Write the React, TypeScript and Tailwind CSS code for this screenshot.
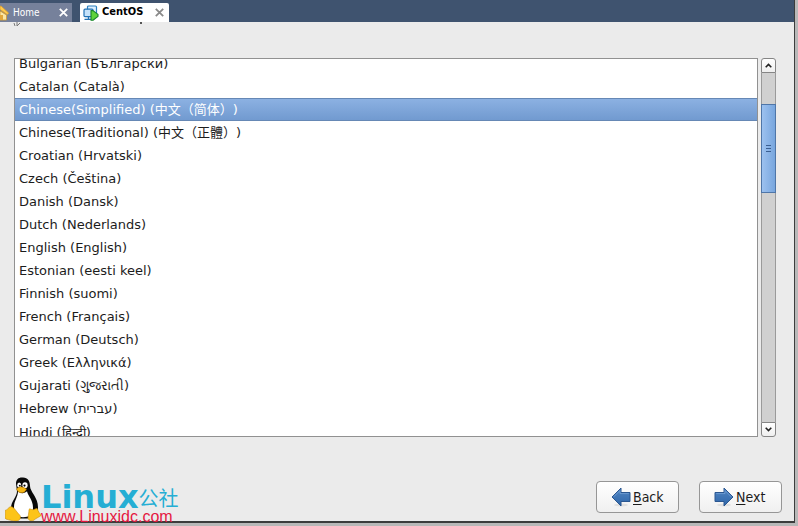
import { useState } from "react";

const languages = [
  { name: "Bulgarian (Български)" },
  { name: "Catalan (Català)" },
  { name: "Chinese(Simplified) (中文（简体）)" },
  { name: "Chinese(Traditional) (中文（正體）)" },
  { name: "Croatian (Hrvatski)" },
  { name: "Czech (Čeština)" },
  { name: "Danish (Dansk)" },
  { name: "Dutch (Nederlands)" },
  { name: "English (English)" },
  { name: "Estonian (eesti keel)" },
  { name: "Finnish (suomi)" },
  { name: "French (Français)" },
  { name: "German (Deutsch)" },
  { name: "Greek (Ελληνικά)" },
  { name: "Gujarati (ગુજરાતી)" },
  { name: "Hebrew (עברית)", tall: true },
  { name: "Hindi (हिन्दी)", tall: true },
];

function CloseIcon() {
  return (
    <svg viewBox="0 0 9 9" className="size-[9px]" fill="none" stroke="currentColor" strokeWidth="1.8">
      <path d="M.8.8 8.2 8.2M8.2.8.8 8.2" />
    </svg>
  );
}

function HomeIcon() {
  return (
    <svg viewBox="0 0 9 16" className="h-4 w-[9px] shrink-0">
      <path d="M0 6.5h1L6.5 10v5H0z" fill="#fae6a6" stroke="#d39a2c" strokeWidth=".8" />
      <path d="M0 1.2h1.2L8.6 8 7.3 9.6 0 4.4z" fill="#ffc94d" stroke="#e0a22c" strokeWidth=".8" />
      <path d="M0 10h3v5H0z" fill="#e2a63a" />
    </svg>
  );
}

function MachineIcon() {
  return (
    <svg viewBox="0 0 16 16" className="size-4 shrink-0">
      <rect x="4.5" y="1" width="9" height="8" rx="1" fill="#dcefff" stroke="#2b7fc0" strokeWidth="1.2" />
      <rect x="1" y="4.2" width="9" height="7.5" rx="1" fill="#c5e2fa" stroke="#2272b5" strokeWidth="1.2" />
      <path d="M1.5 14.4h7M5.5 12v2" stroke="#2272b5" strokeWidth="1.4" />
      <path d="M8 5.6 10 5.6 15 9.4v2L10 15.3H8z" fill="#5ed33b" stroke="#17852b" strokeWidth="1.1" strokeLinejoin="round" />
    </svg>
  );
}

function ArrowIcon({ flip = false }: { flip?: boolean }) {
  return (
    <svg viewBox="0 0 20 20" className={flip ? "size-5 -scale-x-100" : "size-5"}>
      <defs>
        <linearGradient id="arrowFill" x1="0" y1="0" x2="0" y2="1">
          <stop offset="0" stopColor="#5185c2" />
          <stop offset="1" stopColor="#2f66a9" />
        </linearGradient>
      </defs>
      <ellipse cx="10" cy="18" rx="7" ry="1.5" fill="#000" opacity=".08" />
      <path d="M1 5.5h9V1l9 9-9 9v-4.500H1z" fill="url(#arrowFill)" stroke="#2b5791" strokeLinejoin="round" />
      <path d="M2.2 6.6H11v-3l6.200 6.200" fill="none" stroke="#7aa5d8" strokeWidth=".7" />
    </svg>
  );
}

function Penguin() {
  return (
    <svg viewBox="0 0 36 46" preserveAspectRatio="none" className="h-11 w-9 shrink-0">
      <path d="M11 7C11 2 14 0 18 .5c5 .3 7 4 7 9 0 6 8 12 8 22 0 8-5 12-14 12S5 41 6 33c0-8 6-12 6-18z" fill="#080808" />
      <path d="M13 15c3 3 7 2 9 0 1 5 6 9 6 17s-4 10-10 10-9-5-9-11 4-10 4-16z" fill="#fff" />
      <ellipse cx="14.2" cy="8.5" rx="2" ry="2.8" fill="#fff" />
      <ellipse cx="20" cy="8.5" rx="2.6" ry="3" fill="#fff" />
      <circle cx="14.8" cy="9" r="1" />
      <circle cx="19.5" cy="9" r="1.1" />
      <path d="M11.5 12.5c3-3 5-3 10 0-1 3-3 4-5 4s-4-1-5-4z" fill="#f5b614" stroke="#a86d00" strokeWidth=".5" />
      <path d="M0 35c3 0 3-4 6-4s5 5 8 8 1 7-3 7-6-1-10-2c-2-1 0-4-1-9z" fill="#fcc419" stroke="#c98a0b" strokeWidth=".6" />
      <path d="M24 34c1-2 2 1 5 0s3-2 4 1 3 4 3 5-5 3-7 5-6 0-6-2 1-6 1-9z" fill="#fcc419" stroke="#c98a0b" strokeWidth=".6" />
    </svg>
  );
}

function ScrollButton({ down = false }: { down?: boolean }) {
  return (
    <button
      aria-label={down ? "Scroll down" : "Scroll up"}
      className={
        "flex h-[15px] shrink-0 items-center justify-center border border-[#858585] bg-linear-to-b from-white to-[#efefef] " +
        (down ? "rounded-b-[3px]" : "rounded-t-[3px]")
      }
    >
      <svg viewBox="0 0 7 5" className={down ? "h-[5px] w-[7px] rotate-180" : "h-[5px] w-[7px]"}>
        <path d="M.7 4.2 3.5 1.4 6.3 4.2" fill="none" stroke="#222" strokeWidth="1.6" />
      </svg>
    </button>
  );
}

const actionClass =
  "flex h-8 w-[83px] items-center gap-0.5 rounded-[4px] border border-[#969696] bg-linear-to-b from-white to-[#f0f0f0] pl-3.5 font-['DejaVu_Sans_Condensed','DejaVu_Sans',sans-serif] text-sm";

export default function App() {
  const [selected, setSelected] = useState(2);
  return (
    <div className="h-screen bg-[#b8b8b8] pr-[3px] pb-[3px] font-['DejaVu_Sans','Noto_Sans_CJK_SC',sans-serif] text-[#1c1c1c]">
      <div className="flex h-full flex-col border-r border-b-2 border-[#3c3c3c] bg-[#ebebeb]">
        <header className="flex h-[22px] shrink-0 items-end gap-2 bg-[#3f536f] font-['DejaVu_Sans_Condensed','DejaVu_Sans',sans-serif] text-[11px]">
          <div className="flex h-[19px] w-[72px] items-center bg-[#76819b] text-white">
            <HomeIcon />
            <button className="grow pl-1 text-left text-[10px]">Home</button>
            <button aria-label="Close Home" className="pr-1">
              <CloseIcon />
            </button>
          </div>
          <div className="flex h-[19px] w-[89px] items-center rounded-t-xs bg-white pl-[3px] text-black">
            <MachineIcon />
            <button className="grow pl-[3px] text-left font-bold">CentOS</button>
            <button aria-label="Close CentOS" className="pr-[5px] text-[#8a8a8a]">
              <CloseIcon />
            </button>
          </div>
        </header>

        <div className="h-9 shrink-0 overflow-hidden">
          <svg viewBox="0 0 160 6" className="h-1.5 w-40" fill="none" stroke="#777">
            <path d="m14 1 1 3M17 0v4l3-3" />
            <path d="M140 1h2" stroke="#222" strokeWidth="1.5" />
          </svg>
        </div>

        <main className="flex min-h-0 grow gap-[3px] pr-[18px] pl-3.5">
          <div role="listbox" aria-label="Language" className="grow overflow-hidden border border-[#919191] bg-white">
            <div className="-mt-[7px] flex flex-col">
              {languages.map(({ name, tall }, i) => (
                <button
                  key={name}
                  role="option"
                  aria-selected={i === selected}
                  onClick={() => setSelected(i)}
                  className={
                    "shrink-0 overflow-hidden px-1 text-left text-[13px] whitespace-nowrap [text-spacing-trim:space-all] " +
                    (tall ? "h-6 leading-6 " : "h-[23px] leading-[23px] ") +
                    (i === selected
                      ? "bg-linear-to-b from-[#8db2e3] to-[#7099cf] text-white shadow-[inset_0_1px_#6688b5,inset_0_-1px_#6688b5]"
                      : "")
                  }
                >
                  {name}
                </button>
              ))}
            </div>
          </div>
          <div className="flex w-[15px] shrink-0 flex-col">
            <ScrollButton />
            <div className="flex min-h-0 grow flex-col border-x border-[#9a9a9a] bg-[#d0d0d0] pt-[31px]">
              <div className="-mx-px flex h-[89px] flex-col items-center justify-center gap-0.5 border border-[#4f76a8] bg-linear-to-r from-[#9cc1ef] to-[#78a6de]">
                <span className="h-px w-[5px] bg-[#3b5f92]" />
                <span className="h-px w-[5px] bg-[#3b5f92]" />
                <span className="h-px w-[5px] bg-[#3b5f92]" />
              </div>
            </div>
            <ScrollButton down />
          </div>
        </main>

        <footer className="flex h-[84px] shrink-0 items-end justify-between pr-3 pl-[5px]">
          <div className="flex items-end font-['Liberation_Sans','Noto_Sans_CJK_SC',sans-serif]">
            <Penguin />
            <div className="flex flex-col gap-1">
              <div className="flex items-end text-[#25aed4]">
                <span className="font-['DejaVu_Sans'] text-[32px] leading-6 font-bold">Linux</span>
                <span className="text-xl leading-5">公社</span>
              </div>
              <a href="#top" className="text-base leading-2 text-[#e5173f]">
                www.Linuxidc.com
              </a>
            </div>
          </div>
          <div className="flex gap-5 pb-2">
            <button className={actionClass}>
              <ArrowIcon flip />
              <span>
                <u className="underline-offset-2">B</u>ack
              </span>
            </button>
            <button className={actionClass}>
              <ArrowIcon />
              <span>
                <u className="underline-offset-2">N</u>ext
              </span>
            </button>
          </div>
        </footer>
      </div>
    </div>
  );
}
